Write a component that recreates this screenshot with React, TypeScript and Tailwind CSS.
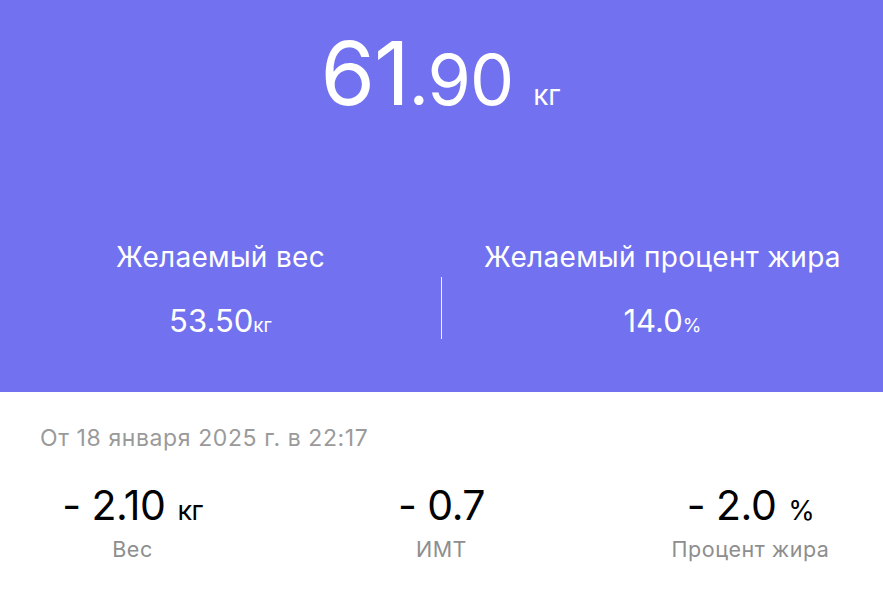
import React from "react";

const font = { fontFamily: "Inter, 'Noto Sans', sans-serif" };

const Delta = ({ value, unit, label }: { value: string; unit?: string; label: string }) => (
  <div className="flex flex-col items-center">
    <div className="flex items-baseline text-[41px] leading-none text-black tracking-[-0.5px]">
      <span>{value}</span>
      {unit && <span className="ml-3 text-[27px]">{unit}</span>}
    </div>
    <div className="mt-[13px] text-[21.5px] leading-none text-[#8e8e8e] tracking-[0.5px]">{label}</div>
  </div>
);

const Goal = ({ title, value, unit }: { title: string; value: string; unit: string }) => (
  <div className="flex flex-col items-center">
    <div className="text-[28px] leading-none tracking-[0.3px]">{title}</div>
    <div className="mt-[34px] flex items-baseline leading-none">
      <span className="text-[31px]">{value}</span>
      <span className="text-[19px]">{unit}</span>
    </div>
  </div>
);

const App = () => {
  return (
    <div className="w-[883px] h-[600px] overflow-hidden bg-white" style={font}>
      {/* Purple header */}
      <div className="h-[392px] bg-[#7271ef] text-white flex flex-col">
        {/* Current weight */}
        <div className="flex items-baseline justify-center pt-[29px] pr-[2px] leading-none">
          <span className="text-[88px] tracking-[-1px]">61</span>
          <span className="text-[70px] tracking-[-1px]">.90</span>
          <span className="ml-5 text-[28px]">кг</span>
        </div>

        {/* Goals */}
        <div className="mt-[126px] grid grid-cols-[1fr_1px_1fr]">
          <Goal title="Желаемый вес" value="53.50" unit="кг" />
          <div className="h-[62px] self-end -mb-[3px] bg-white/90" />
          <Goal title="Желаемый процент жира" value="14.0" unit="%" />
        </div>
      </div>

      {/* Last measurement */}
      <div className="pt-[35px] pl-[40px] text-[23px] leading-none text-[#9a9a9a] tracking-[0.6px]">
        От 18 января 2025 г. в 22:17
      </div>

      <div className="mt-[35px] -mx-[22px] grid grid-cols-3">
        <Delta value="- 2.10" unit="кг" label="Вес" />
        <Delta value="- 0.7" label="ИМТ" />
        <Delta value="- 2.0" unit="%" label="Процент жира" />
      </div>
    </div>
  );
};

export default App;
